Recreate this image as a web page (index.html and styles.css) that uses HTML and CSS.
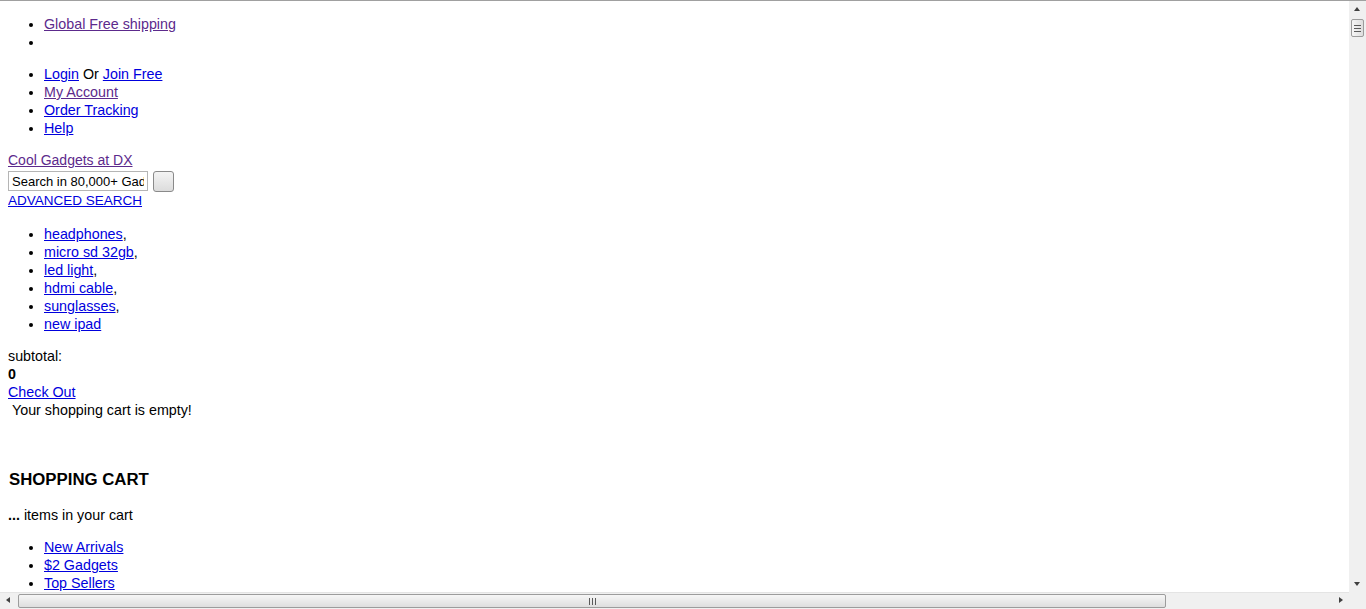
FILE: index.html
```html
<!DOCTYPE html>
<html>
<head>
<meta charset="utf-8">
<title>DX</title>
<link rel="stylesheet" href="styles.css">
</head>
<body>
<ul class="list">
  <li><a class="visited" href="#">Global Free shipping</a></li>
  <li></li>
</ul>
<ul class="list">
  <li><a href="#">Login</a> Or <a href="#">Join Free</a></li>
  <li><a class="visited" href="#">My Account</a></li>
  <li><a href="#">Order Tracking</a></li>
  <li><a href="#">Help</a></li>
</ul>
<div class="logo"><a class="visited" href="#">Cool Gadgets at DX</a></div>
<form class="search">
  <input class="search-input" type="text" value="Search in 80,000+ Gadgets">
  <button class="search-btn" type="button"></button>
</form>
<div class="adv"><a href="#">ADVANCED SEARCH</a></div>
<ul class="list">
  <li><a href="#">headphones</a>,</li>
  <li><a href="#">micro sd 32gb</a>,</li>
  <li><a href="#">led light</a>,</li>
  <li><a href="#">hdmi cable</a>,</li>
  <li><a href="#">sunglasses</a>,</li>
  <li><a href="#">new ipad</a></li>
</ul>
<div class="cart">
  <div>subtotal:</div>
  <div class="bold">0</div>
  <div><a href="#">Check Out</a></div>
  <div>&nbsp;Your shopping cart is empty!</div>
</div>
<h3 class="cart-title">SHOPPING CART</h3>
<p class="cart-count"><b>...</b> items in your cart</p>
<ul class="list">
  <li><a href="#">New Arrivals</a></li>
  <li><a href="#">$2 Gadgets</a></li>
  <li><a href="#">Top Sellers</a></li>
</ul>

<div class="vscroll">
  <div class="arrow-up"></div>
  <div class="vthumb"><span></span><span></span><span></span></div>
  <div class="vtrack"></div>
  <div class="arrow-down"></div>
</div>
<div class="hscroll">
  <div class="arrow-left"></div>
  <div class="hthumb"><span></span><span></span><span></span></div>
  <div class="htrack"></div>
  <div class="arrow-right"></div>
</div>
<div class="corner"></div>
</body>
</html>
```

FILE: styles.css
```css
html {
  border-top: 1px solid #a0a0a0;
  overflow: hidden;
  background: #fff;
}
body {
  margin: 0 8px 8px;
  font-family: "Liberation Sans", Arial, sans-serif;
  font-size: 14.3px;
  line-height: 18px;
  color: #000;
}
a {
  color: #0000dd;
  text-decoration: underline;
}
a.visited {
  color: #5c2a8c;
}
.list {
  margin: 14px 0;
  padding-left: 36px;
  list-style: disc;
}
.list li {
  min-height: 18px;
}
.logo {
  font-size: 14px;
}
.search {
  display: flex;
  align-items: flex-start;
  gap: 5px;
  margin: 0;
  padding-top: 2px;
  height: 21px;
}
.search-input {
  box-sizing: border-box;
  width: 140px;
  height: 20px;
  margin: 0;
  padding: 0 3px;
  border: 1px solid #b5b5b5;
  font-family: "Liberation Sans", Arial, sans-serif;
  font-size: 13px;
  color: #000;
  background: #fff;
  overflow: hidden;
}
.search-btn {
  box-sizing: border-box;
  width: 21px;
  height: 21px;
  margin: 0;
  padding: 0;
  border: 1px solid #8a8a8a;
  border-radius: 3px;
  background: linear-gradient(#f4f4f4, #dcdcdc);
}
.adv {
  font-size: 13.5px;
  padding-bottom: 1px;
}
.bold {
  font-weight: bold;
}
.cart-title {
  margin: 51px 0 16px;
  padding-left: 1px;
  font-size: 16.8px;
  line-height: 20px;
  font-weight: bold;
}
.cart-count {
  margin: 0;
}

/* fake classic scrollbars */
.vscroll {
  position: fixed;
  top: 1px;
  right: 0;
  bottom: 17px;
  width: 17px;
  background: #f0f0f0;
  display: flex;
  flex-direction: column;
  align-items: center;
}
.arrow-up, .arrow-down {
  height: 17px;
  width: 17px;
  flex: none;
  position: relative;
}
.arrow-up::after {
  content: "";
  position: absolute;
  left: 5px;
  top: 6px;
  border-left: 3.5px solid transparent;
  border-right: 3.5px solid transparent;
  border-bottom: 4px solid #404040;
}
.arrow-down::after {
  content: "";
  position: absolute;
  left: 5px;
  top: 7px;
  border-left: 3.5px solid transparent;
  border-right: 3.5px solid transparent;
  border-top: 4px solid #404040;
}
.vthumb {
  box-sizing: border-box;
  width: 13px;
  height: 18px;
  margin-top: 1px;
  flex: none;
  border: 1px solid #9c9c9c;
  border-radius: 2px;
  background: linear-gradient(90deg, #f6f6f6, #dedede);
  display: flex;
  flex-direction: column;
  justify-content: center;
  align-items: center;
  gap: 2px;
}
.vthumb span {
  width: 7px;
  height: 1px;
  background: #5a5a5a;
}
.vtrack, .htrack {
  flex: 1;
}
.hscroll {
  position: fixed;
  left: 0;
  right: 17px;
  bottom: 0;
  height: 17px;
  background: #f0f0f0;
  display: flex;
  align-items: center;
  border-top: 1px solid #e4e4e4;
  box-sizing: border-box;
}
.arrow-left, .arrow-right {
  width: 17px;
  height: 17px;
  flex: none;
  position: relative;
}
.arrow-left::after {
  content: "";
  position: absolute;
  left: 6px;
  top: 4px;
  border-top: 3.5px solid transparent;
  border-bottom: 3.5px solid transparent;
  border-right: 4px solid #404040;
}
.arrow-right::after {
  content: "";
  position: absolute;
  left: 7px;
  top: 4px;
  border-top: 3.5px solid transparent;
  border-bottom: 3.5px solid transparent;
  border-left: 4px solid #404040;
}
.hthumb {
  box-sizing: border-box;
  width: 1148px;
  height: 14px;
  margin-left: 1px;
  flex: none;
  border: 1px solid #9c9c9c;
  border-radius: 2px;
  background: linear-gradient(#f6f6f6, #dedede);
  display: flex;
  justify-content: center;
  align-items: center;
  gap: 2px;
}
.hthumb span {
  width: 1px;
  height: 7px;
  background: #5a5a5a;
}
.corner {
  position: fixed;
  right: 0;
  bottom: 0;
  width: 17px;
  height: 17px;
  background: #f0f0f0;
}
```
